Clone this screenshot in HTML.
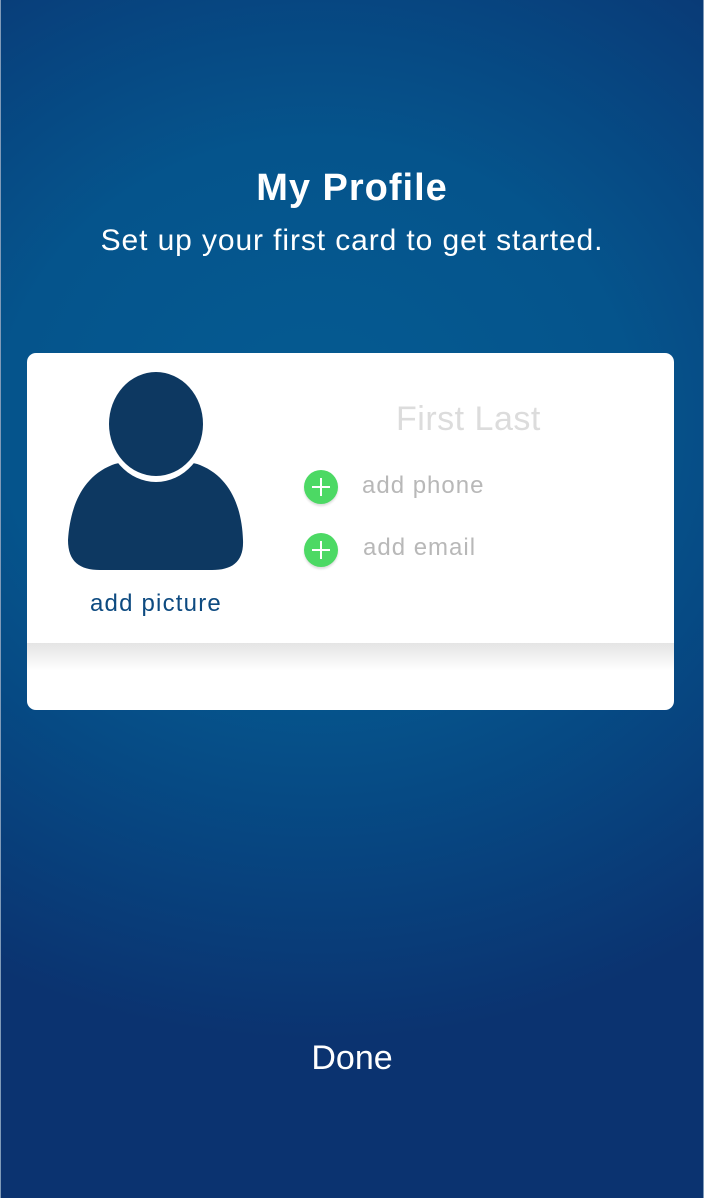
<!DOCTYPE html>
<html><head><style>
html,body{margin:0;padding:0}
body{width:704px;height:1198px;position:relative;overflow:hidden;font-family:"Liberation Sans",sans-serif;
background:radial-gradient(ellipse 700px 620px at 45% 420px,#055b92 0%,#05548c 45%,#074580 70%,#0b3370 100%);}
.edge{position:absolute;top:0;bottom:0;width:1px;background:#7f9ab8}
.title{position:absolute;top:167px;left:0;width:704px;text-align:center;color:#fff;font-size:38px;font-weight:bold;letter-spacing:1px}
.sub{position:absolute;top:224px;left:0;width:704px;text-align:center;color:#fff;font-size:30px;letter-spacing:0.9px}
.card{position:absolute;left:27px;top:353px;width:647px;height:357px;background:#fff;border-radius:9px;overflow:hidden}
.div{position:absolute;left:0;top:290px;width:647px;height:28px;background:linear-gradient(#e4e4e4,#fff)}
.name{position:absolute;left:396px;top:400px;color:#dcdcdc;font-size:34px;letter-spacing:0.5px}
.plus{position:absolute;width:34px;height:34px;border-radius:50%;background:#4cd964;box-shadow:0 2px 2px #ddd}
.plus:before{content:"";position:absolute;left:8px;top:16px;width:18px;height:2px;background:#fff}
.plus:after{content:"";position:absolute;left:16px;top:8px;width:2px;height:18px;background:#fff}
.lbl{position:absolute;color:#b8b8b8;font-size:24px;letter-spacing:1px}
.pic{position:absolute;left:90px;top:590px;color:#0d4a80;font-size:24px;letter-spacing:1.2px}
.done{position:absolute;top:1039px;left:0;width:704px;text-align:center;color:#fff;font-size:34px}
</style></head><body>
<div class="edge" style="left:0"></div><div class="edge" style="right:0"></div>
<div class="title">My Profile</div>
<div class="sub">Set up your first card to get started.</div>
<div class="card"><div class="div"></div></div>
<svg style="position:absolute;left:60px;top:370px" width="190" height="210" viewBox="60 370 190 210">
<path d="M112 465 C130 458 140 470 156 478 C172 470 182 458 200 465 C232 478 242 510 243 540 C244 562 232 570 212 570 L100 570 C80 570 68 562 68 540 C70 510 80 478 112 465Z" fill="#0d3861"/>
<ellipse cx="156" cy="425" rx="51" ry="57" fill="#fff"/>
<ellipse cx="156" cy="424" rx="47" ry="52" fill="#0d3861"/>
</svg>
<div class="name">First Last</div>
<div class="plus" style="left:304px;top:470px"></div>
<div class="lbl" style="left:362px;top:472px">add phone</div>
<div class="plus" style="left:304px;top:533px"></div>
<div class="lbl" style="left:363px;top:534px">add email</div>
<div class="pic">add picture</div>
<div class="done">Done</div>
</body></html>
